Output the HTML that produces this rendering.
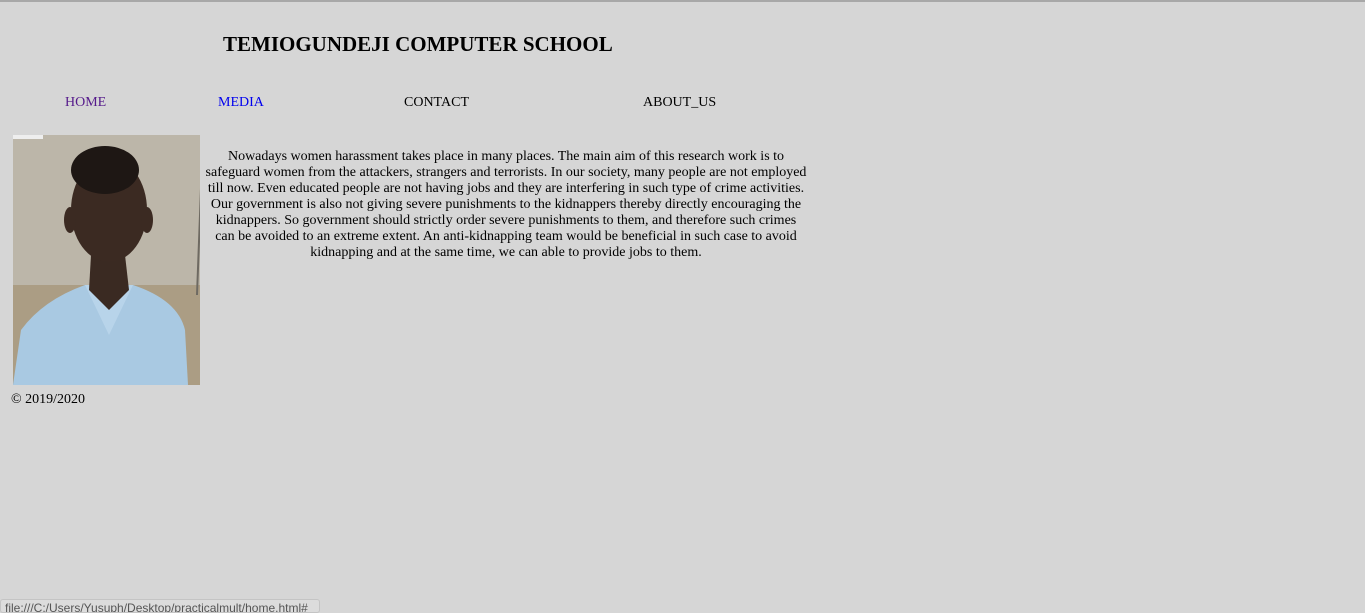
<!DOCTYPE html>
<html><head><meta charset="utf-8"><style>
html,body{margin:0;padding:0;}
body{width:1365px;height:611px;background:#d6d6d6;position:relative;overflow:hidden;font-family:"Liberation Serif",serif;color:#000;}
.topline{position:absolute;left:0;top:0;width:1365px;height:2px;background:#a8a8a8;}
.t{position:absolute;white-space:nowrap;}
h1{position:absolute;left:223px;top:32px;margin:0;font-size:21px;font-weight:bold;white-space:nowrap;}
.nav{font-size:14px;top:95px;}
.para{position:absolute;left:203px;top:149px;width:606px;text-align:center;font-size:14px;line-height:16px;}
.photo{position:absolute;left:13px;top:135px;width:187px;height:250px;overflow:hidden;}
.status{position:absolute;left:0;top:599px;width:320px;height:14px;background:#dcdcdc;border:1px solid #c4c4c4;border-radius:3px;font-family:"Liberation Sans",sans-serif;font-size:12px;color:#555;line-height:16px;padding-left:4px;box-sizing:border-box;white-space:nowrap;overflow:hidden;}
</style></head><body>
<div class="topline"></div>
<h1>TEMIOGUNDEJI COMPUTER SCHOOL</h1>
<div class="t nav" style="left:65px;color:#551a8b">HOME</div>
<div class="t nav" style="left:218px;color:#0000ee">MEDIA</div>
<div class="t nav" style="left:404px">CONTACT</div>
<div class="t nav" style="left:643px">ABOUT_US</div>
<div class="photo">
<svg width="187" height="250" viewBox="0 0 187 250">
<rect x="0" y="0" width="187" height="160" fill="#bcb6a9"/>
<rect x="0" y="150" width="187" height="100" fill="#ab9d84"/>
<line x1="190" y1="0" x2="184" y2="160" stroke="#6e6a62" stroke-width="2"/>
<rect x="0" y="0" width="30" height="4" fill="#eee"/>
<path d="M0 250 L8 195 Q30 165 72 150 L120 150 Q165 165 172 195 L175 250 Z" fill="#a9c9e2"/>
<path d="M72 150 L96 200 L120 150 Z" fill="#b8d4ea"/>
<path d="M78 120 L112 120 L116 155 L96 175 L76 155 Z" fill="#3a2a22"/>
<ellipse cx="96" cy="75" rx="38" ry="52" fill="#3b2a22"/>
<ellipse cx="92" cy="35" rx="34" ry="24" fill="#1e1714"/>
<ellipse cx="57" cy="85" rx="6" ry="13" fill="#3b2a22"/>
<ellipse cx="134" cy="85" rx="6" ry="13" fill="#3b2a22"/>
</svg>
</div>
<div class="para">Nowadays women harassment takes place in many places. The main aim of this research work is to<br>safeguard women from the attackers, strangers and terrorists. In our society, many people are not employed<br>till now. Even educated people are not having jobs and they are interfering in such type of crime activities.<br>Our government is also not giving severe punishments to the kidnappers thereby directly encouraging the<br>kidnappers. So government should strictly order severe punishments to them, and therefore such crimes<br>can be avoided to an extreme extent. An anti-kidnapping team would be beneficial in such case to avoid<br>kidnapping and at the same time, we can able to provide jobs to them.</div>
<div class="t" style="left:11px;top:392px;font-size:14px">© 2019/2020</div>
<div class="status">file:///C:/Users/Yusuph/Desktop/practicalmult/home.html#</div>
</body></html>
